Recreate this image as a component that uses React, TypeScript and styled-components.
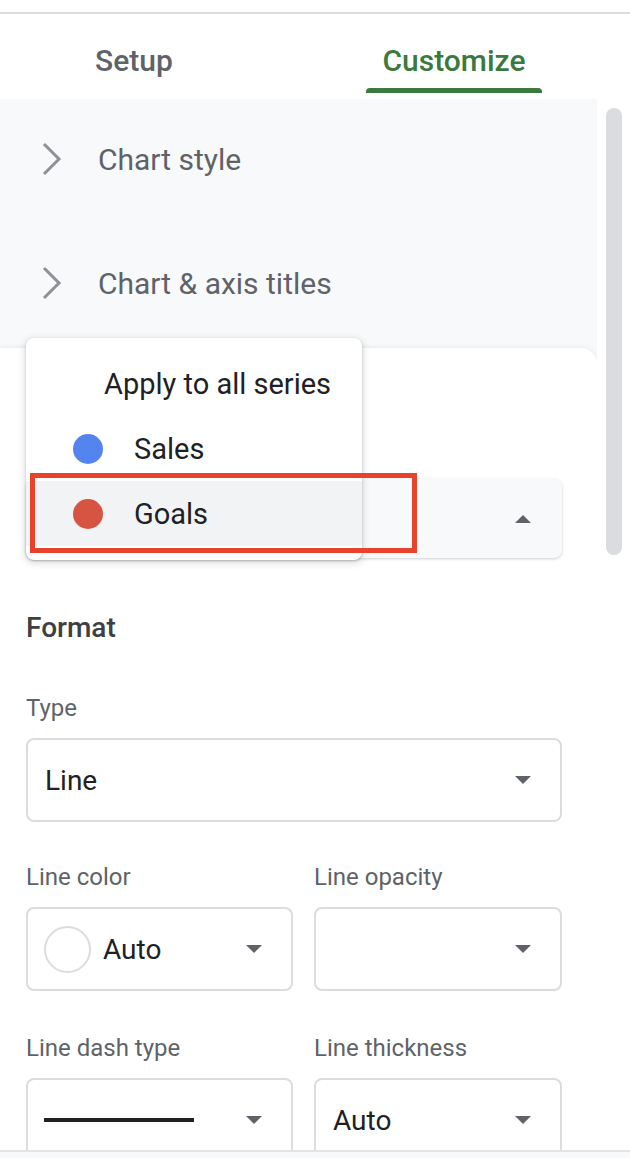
import React from "react";
import styled, { createGlobalStyle } from "styled-components";

const Global = createGlobalStyle`
  html, body { margin: 0; padding: 0; background: #ffffff; }
  body { font-family: Roboto, "Noto Sans", "Liberation Sans", sans-serif; -webkit-font-smoothing: antialiased; }
  * { box-sizing: border-box; }
`;

const Page = styled.div`
  width: 630px;
  height: 1158px;
  display: flex;
  flex-direction: column;
  overflow: hidden;
  background: #f8f9fa;
`;

const Main = styled.div`
  flex: 1;
  display: flex;
  flex-direction: column;
  min-height: 0;
  background: #ffffff;
  border-bottom-right-radius: 16px;
`;

const TopRule = styled.div`
  height: 14px;
  flex-shrink: 0;
  border-bottom: 2px solid #dadce0;
`;

const Tabs = styled.div`
  height: 85px;
  flex-shrink: 0;
  display: flex;
  padding-left: 46px;
  gap: 144px;
`;

const Tab = styled.div<{ $active?: boolean }>`
  width: 176px;
  height: 79px;
  display: flex;
  flex-direction: column;
  align-items: center;
  padding-top: 31px;
  font-size: 30px;
  line-height: 32px;
  font-weight: 500;
  color: ${(p) => (p.$active ? "#3a7a3d" : "#5f6368")};
`;

const Indicator = styled.div<{ $active?: boolean }>`
  margin-top: auto;
  width: 100%;
  height: 5px;
  border-radius: 4px 4px 0 0;
  background: ${(p) => (p.$active ? "#3a7a3d" : "transparent")};
`;

const Body = styled.div`
  flex: 1;
  min-height: 0;
  display: flex;
  position: relative;
`;

const Scroll = styled.div`
  width: 597px;
  display: flex;
  flex-direction: column;
  background: #f8f9fa;
  overflow: hidden;
`;

const AccordionRow = styled.div`
  height: 124px;
  flex-shrink: 0;
  display: flex;
  align-items: center;
  padding: 0 0 4px 40px;
  gap: 34px;
  font-size: 30px;
  font-weight: 400;
  color: #5f6368;
`;

const Card = styled.div`
  flex: 1;
  margin-top: 1px;
  background: #ffffff;
  border-top-right-radius: 16px;
  box-shadow: 0 -1px 4px rgba(60, 64, 67, 0.08);
  padding: 0 35px 0 26px;
  display: flex;
  flex-direction: column;
`;

const SeriesSelect = styled.div`
  margin-top: 131px;
  height: 79px;
  flex-shrink: 0;
  border-radius: 8px;
  background: #f8f9fa;
  box-shadow: 0 1px 3px rgba(60, 64, 67, 0.25);
  display: flex;
  align-items: center;
  justify-content: flex-end;
  padding-right: 31px;
`;

const SectionTitle = styled.div`
  margin-top: 54px;
  font-size: 28px;
  line-height: 32px;
  font-weight: 500;
  color: #3c4043;
`;

const FieldLabel = styled.div<{ $gap: number }>`
  margin-top: ${(p) => p.$gap}px;
  font-size: 24px;
  line-height: 28px;
  color: #5f6368;
  white-space: nowrap;
`;

const Select = styled.div`
  margin-top: 16px;
  height: 84px;
  flex-shrink: 0;
  border: 2px solid #dadce0;
  border-radius: 8px;
  display: flex;
  align-items: center;
  padding: 0 29px 0 17px;
  font-size: 28px;
  color: #202124;
`;

const SelectValue = styled.div`
  flex: 1;
  display: flex;
  align-items: center;
  gap: 12px;
  min-width: 0;
`;

const ColorCircle = styled.div`
  width: 47px;
  height: 47px;
  margin-left: -1px;
  border-radius: 50%;
  border: 2px solid #dadce0;
  background: #ffffff;
`;

const DashLine = styled.div`
  width: 150px;
  height: 4px;
  margin-left: -1px;
  background: #202124;
`;

const Grid = styled.div`
  display: grid;
  grid-template-columns: 267px 248px;
  column-gap: 21px;
`;

const Column = styled.div`
  display: flex;
  flex-direction: column;
`;

const TrackArea = styled.div`
  width: 33px;
  padding: 9px 0 0 9px;
  background: #ffffff;
`;

const Thumb = styled.div`
  width: 16px;
  height: 447px;
  border-radius: 8px;
  background: #dadce0;
`;

const Menu = styled.div`
  position: absolute;
  left: 26px;
  top: 239px;
  width: 336px;
  padding: 13px 0 14px;
  background: #ffffff;
  border-radius: 8px;
  box-shadow: 0 2px 6px 2px rgba(60, 64, 67, 0.15), 0 1px 2px rgba(60, 64, 67, 0.3);
`;

const MenuItem = styled.div<{ $indent: number; $selected?: boolean }>`
  height: 65px;
  display: flex;
  align-items: center;
  gap: 31px;
  padding-left: ${(p) => p.$indent}px;
  font-size: 29px;
  color: #202124;
  background: ${(p) => (p.$selected ? "#f1f3f4" : "transparent")};
`;

const Dot = styled.div<{ $color: string }>`
  width: 30px;
  height: 30px;
  border-radius: 50%;
  background: ${(p) => p.$color};
`;

const Highlight = styled.div`
  position: absolute;
  left: 30px;
  top: 374px;
  width: 387px;
  height: 80px;
  border: 5px solid #e8412c;
  pointer-events: none;
`;

const Footer = styled.div`
  height: 8px;
  flex-shrink: 0;
  border-top: 2px solid #e3e4e6;
  background: #f8f9fa;
`;

const Chevron = () => (
  <svg width="24" height="34" viewBox="0 0 24 34" fill="none">
    <path d="M4 2 L19 17 L4 32" stroke="#8e9196" strokeWidth="3" strokeLinecap="butt" strokeLinejoin="miter" />
  </svg>
);

const Caret = ({ up }: { up?: boolean }) => (
  <svg width="16" height="8" viewBox="0 0 16 8">
    <path d={up ? "M0 8 L8 0 L16 8 Z" : "M0 0 L16 0 L8 8 Z"} fill="#5f6368" />
  </svg>
);

export default function App() {
  return (
    <>
      <Global />
      <Page>
        <Main>
          <TopRule />
          <Tabs>
            <Tab>
              Setup
              <Indicator />
            </Tab>
            <Tab $active>
              Customize
              <Indicator $active />
            </Tab>
          </Tabs>
          <Body>
            <Scroll>
              <AccordionRow>
                <Chevron />
                Chart style
              </AccordionRow>
              <AccordionRow>
                <Chevron />
                Chart &amp; axis titles
              </AccordionRow>
              <Card>
                <SeriesSelect>
                  <Caret up />
                </SeriesSelect>
                <SectionTitle>Format</SectionTitle>
                <FieldLabel $gap={50}>Type</FieldLabel>
                <Select>
                  <SelectValue>Line</SelectValue>
                  <Caret />
                </Select>
                <Grid>
                  <Column>
                    <FieldLabel $gap={41}>Line color</FieldLabel>
                    <Select>
                      <SelectValue>
                        <ColorCircle />
                        Auto
                      </SelectValue>
                      <Caret />
                    </Select>
                    <FieldLabel $gap={43}>Line dash type</FieldLabel>
                    <Select>
                      <SelectValue>
                        <DashLine />
                      </SelectValue>
                      <Caret />
                    </Select>
                  </Column>
                  <Column>
                    <FieldLabel $gap={41}>Line opacity</FieldLabel>
                    <Select>
                      <SelectValue />
                      <Caret />
                    </Select>
                    <FieldLabel $gap={43}>Line thickness</FieldLabel>
                    <Select>
                      <SelectValue>Auto</SelectValue>
                      <Caret />
                    </Select>
                  </Column>
                </Grid>
              </Card>
            </Scroll>
            <TrackArea>
              <Thumb />
            </TrackArea>
            <Menu>
              <MenuItem $indent={78}>Apply to all series</MenuItem>
              <MenuItem $indent={47}>
                <Dot $color="#5484ed" />
                Sales
              </MenuItem>
              <MenuItem $indent={47} $selected>
                <Dot $color="#d75442" />
                Goals
              </MenuItem>
            </Menu>
            <Highlight />
          </Body>
        </Main>
        <Footer />
      </Page>
    </>
  );
}
